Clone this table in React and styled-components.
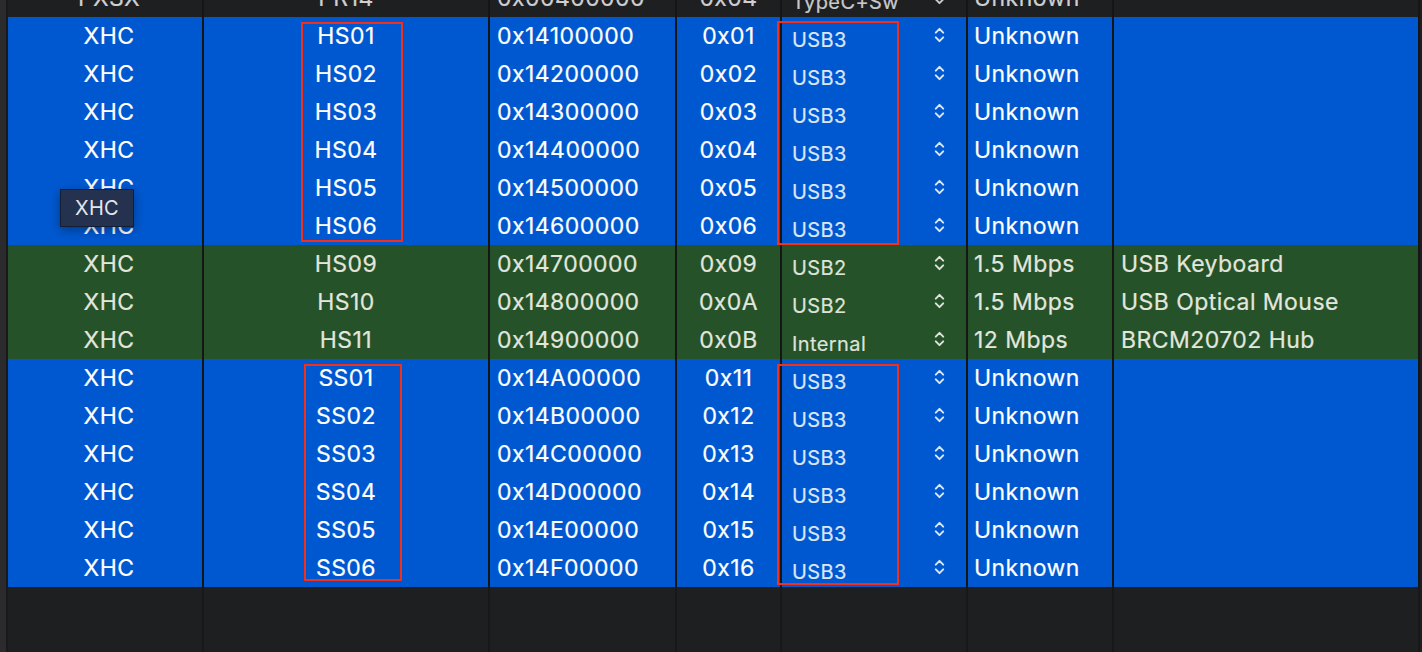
import React from 'react';
import styled, { createGlobalStyle } from 'styled-components';

const GlobalStyle = createGlobalStyle`
  html, body {
    margin: 0;
    padding: 0;
    background: #1e1f21;
    overflow: hidden;
  }
  body {
    font-family: Inter, "Noto Sans", "Liberation Sans", sans-serif;
  }
`;

const hexRange = (start, count, base, pad) =>
  Array.from({ length: count }, (_, i) =>
    '0x' + (start + i * base).toString(16).toUpperCase().padStart(pad, '0')
  );

const usb3Rows = (prefix, addrStart, idxStart) => {
  const addrs = hexRange(addrStart, 6, 0x100000, 8);
  const idxs = hexRange(idxStart, 6, 1, 2);
  return addrs.map((addr, i) => ({
    ctrl: 'XHC',
    port: `${prefix}0${i + 1}`,
    addr,
    idx: idxs[i],
    type: 'USB3',
    speed: 'Unknown',
    name: '',
    tone: 'blue',
  }));
};

const rows = [
  { ctrl: 'PXSX', port: 'PR14', addr: '0x00400000', idx: '0x04', type: 'TypeC+Sw', speed: 'Unknown', name: '', tone: 'plain' },
  ...usb3Rows('HS', 0x14100000, 0x01),
  { ctrl: 'XHC', port: 'HS09', addr: '0x14700000', idx: '0x09', type: 'USB2', speed: '1.5 Mbps', name: 'USB Keyboard', tone: 'green' },
  { ctrl: 'XHC', port: 'HS10', addr: '0x14800000', idx: '0x0A', type: 'USB2', speed: '1.5 Mbps', name: 'USB Optical Mouse', tone: 'green' },
  { ctrl: 'XHC', port: 'HS11', addr: '0x14900000', idx: '0x0B', type: 'Internal', speed: '12 Mbps', name: 'BRCM20702 Hub', tone: 'green' },
  ...usb3Rows('SS', 0x14a00000, 0x11),
];

// red annotation boxes drawn over the table
const highlights = [
  { x: 301, y: 22, w: 102, h: 220 },
  { x: 777, y: 21, w: 122, h: 224 },
  { x: 304, y: 364, w: 98, h: 217 },
  { x: 777, y: 364, w: 122, h: 221 },
];

const toneBg = {
  plain: '#1e1f21',
  blue: '#0058d0',
  green: '#255229',
  empty: '#1e1f21',
};

const toneText = {
  plain: '#cfcfd1',
  blue: '#ffffff',
  green: '#e2e6df',
  empty: '#ffffff',
};

const toneSoft = {
  plain: '#c9c9cc',
  blue: '#dbe6f7',
  green: '#dde2da',
  empty: '#ffffff',
};

const Chevrons = ({ color }) => (
  <svg width="11" height="16" viewBox="0 0 11 16" fill="none">
    <path d="M1.8 5.6 L5.5 1.9 L9.2 5.6" stroke={color} strokeWidth="2" strokeLinecap="round" strokeLinejoin="round" />
    <path d="M1.8 10.4 L5.5 14.1 L9.2 10.4" stroke={color} strokeWidth="2" strokeLinecap="round" strokeLinejoin="round" />
  </svg>
);

const App = () => {
  return (
    <Page>
      <GlobalStyle />
      <SideStrip />
      <Table>
        {rows.map((row, i) => (
          <Row key={i} $tone={row.tone}>
            <Cell $align="center" $pad="0 0 0 8px">{row.ctrl}</Cell>
            <Cell $align="center">{row.port}</Cell>
            <Cell $pad="0 0 0 7px">{row.addr}</Cell>
            <Cell $align="center">{row.idx}</Cell>
            <PopupCell>
              <PopupLabel $tone={row.tone}>{row.type}</PopupLabel>
              <Chevrons color={toneSoft[row.tone]} />
            </PopupCell>
            <Cell $pad="0 0 0 6px">{row.speed}</Cell>
            <Cell $pad="0 0 0 7px">{row.name}</Cell>
          </Row>
        ))}
        {[0, 1].map((i) => (
          <Row key={`empty-${i}`} $tone="empty">
            {Array.from({ length: 7 }, (_, c) => (
              <Cell key={c} $empty />
            ))}
          </Row>
        ))}
      </Table>

      {highlights.map((h, i) => (
        <Highlight key={i} $x={h.x} $y={h.y} $w={h.w} $h={h.h} />
      ))}

      <Tooltip>XHC</Tooltip>
    </Page>
  );
};

// Styled Components
const Page = styled.div`
  position: relative;
  display: flex;
  align-items: flex-start;
  width: 1422px;
  height: 652px;
  overflow: hidden;
  background: #1e1f21;
`;

const SideStrip = styled.div`
  flex: 0 0 6px;
  align-self: stretch;
  background: #2b2b2d;
  border-right: 2px solid #1a1a1c;
`;

const Table = styled.div`
  display: flex;
  flex-direction: column;
  flex: 0 0 1412px;
  margin-top: -21px;
`;

const Row = styled.div`
  display: grid;
  grid-template-columns: 196px 286px 187px 105px 186px 146px 306px;
  flex: 0 0 38px;
  height: 38px;
  background: ${(p) => toneBg[p.$tone]};
  color: ${(p) => toneText[p.$tone]};
  font-size: 23px;
  letter-spacing: 0.45px;
  -webkit-text-stroke: 0.2px currentColor;
`;

const Cell = styled.div`
  display: flex;
  align-items: center;
  justify-content: ${(p) => (p.$align === 'center' ? 'center' : 'flex-start')};
  padding: ${(p) => p.$pad || '0'};
  border-right: 2px solid ${(p) => (p.$empty ? '#18181a' : '#161617')};
  white-space: nowrap;
  overflow: hidden;
`;

const PopupCell = styled.div`
  display: flex;
  align-items: center;
  justify-content: space-between;
  padding: 0 21px 3px 10px;
  border-right: 2px solid #161617;
`;

const PopupLabel = styled.span`
  font-size: 20px;
  letter-spacing: 0.4px;
  padding-top: 10px;
  color: ${(p) => toneSoft[p.$tone]};
`;

const Highlight = styled.div`
  position: absolute;
  left: ${(p) => p.$x}px;
  top: ${(p) => p.$y}px;
  width: ${(p) => p.$w}px;
  height: ${(p) => p.$h}px;
  box-sizing: border-box;
  border: 2px solid #f2301c;
  pointer-events: none;
`;

const Tooltip = styled.div`
  position: absolute;
  left: 60px;
  top: 189px;
  width: 74px;
  height: 38px;
  box-sizing: border-box;
  display: flex;
  align-items: center;
  justify-content: center;
  background: #24324f;
  border: 1px solid #131d33;
  color: #e4e6ea;
  font-size: 20px;
  letter-spacing: 0.3px;
  box-shadow: 0 3px 10px rgba(0, 0, 0, 0.35);
`;

export default App;
